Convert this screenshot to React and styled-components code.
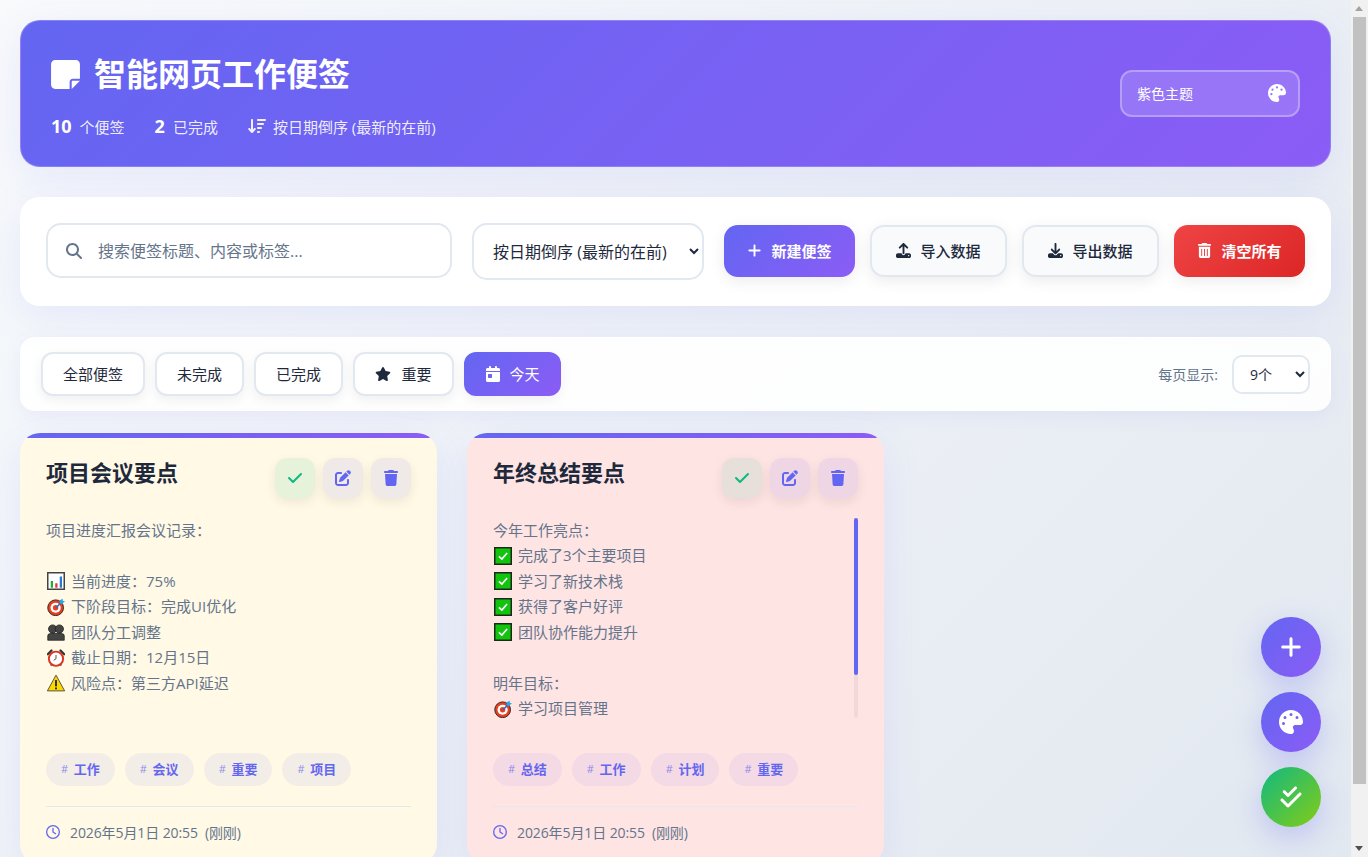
import React from "react";
import styled, { createGlobalStyle } from "styled-components";
import {
  FaNoteSticky, FaArrowDownWideShort, FaPalette, FaMagnifyingGlass, FaPlus, FaUpload, FaDownload,
  FaTrashCan, FaTrash, FaStar, FaCalendarDay, FaCheck, FaPenToSquare, FaRegClock, FaCheckDouble,
} from "react-icons/fa6";

const FONT = `"Open Sans", "Noto Sans CJK SC", sans-serif`;
const BRAND = "linear-gradient(135deg, #6366f1, #8b5cf6)";

const Global = createGlobalStyle`
  body {
    margin: 0;
    font-family: ${FONT};
    color: #1e293b;
    background: linear-gradient(135deg, #f8fafc 0%, #e2e8f0 100%);
    background-attachment: fixed;
    min-height: 100vh;
  }
  * { box-sizing: border-box; }
`;

const Page = styled.div`
  padding: 20px 37px 52px 20px;
  display: flex;
  flex-direction: column;
`;

const ScrollRail = styled.div`
  position: fixed;
  top: 0;
  right: 0;
  bottom: 0;
  width: 17px;
  background: #f1f1f1;
  &::before, &::after {
    content: "";
    position: absolute;
    left: 4px;
    border-left: 4.5px solid transparent;
    border-right: 4.5px solid transparent;
  }
  &::before { top: 6px; border-bottom: 5px solid #a3a3a3; }
  &::after { bottom: 6px; border-top: 5px solid #505050; }
`;

const ScrollThumb = styled.div`
  position: absolute;
  top: 17px;
  left: 2px;
  width: 13px;
  height: 767px;
  background: #c1c1c1;
`;

const Header = styled.header`
  height: 147px;
  padding: 30px;
  border: 1px solid rgba(255, 255, 255, 0.2);
  border-radius: 20px;
  background: ${BRAND};
  color: #fff;
  box-shadow: 0 10px 40px rgba(99, 102, 241, 0.1);
  display: flex;
  align-items: center;
  justify-content: space-between;
  margin-bottom: 30px;
`;

const Brand = styled.div`
  display: flex;
  flex-direction: column;
  gap: 18px;
  padding-top: 3px;
`;

const Title = styled.h1`
  margin: 0;
  display: flex;
  align-items: center;
  gap: 12px;
  font-size: 32px;
  line-height: 44px;
  font-weight: 700;
  svg { font-size: 33px; margin-left: -2px; }
`;

const Stats = styled.div`
  display: flex;
  align-items: center;
  gap: 30px;
  height: 24px;
`;

const Stat = styled.div`
  display: flex;
  align-items: center;
  gap: 8px;
  font-size: 15px;
  color: rgba(255, 255, 255, 0.9);
  b { font-size: 18px; font-weight: 700; color: #fff; }
  svg { font-size: 18px; margin-right: -1px; }
`;

const ThemeBox = styled.div`
  width: 180px;
  height: 47px;
  padding: 0 12px 0 15px;
  border: 2px solid rgba(255, 255, 255, 0.3);
  border-radius: 12px;
  background: rgba(255, 255, 255, 0.15);
  display: flex;
  align-items: center;
  justify-content: space-between;
  font-size: 14px;
  svg { font-size: 18px; margin-bottom: 1px; }
`;

const ThemeLabel = styled.span`
  padding-bottom: 2px;
`;

const Toolbar = styled.section`
  padding: 26px;
  border-radius: 20px;
  background: #fff;
  box-shadow: 0 10px 40px rgba(99, 102, 241, 0.1);
  display: flex;
  align-items: flex-start;
  gap: 20px;
  margin-bottom: 31px;
`;

const Search = styled.label`
  width: 406px;
  height: 55px;
  padding: 0 18px;
  border: 2px solid #e2e8f0;
  border-radius: 15px;
  background: #fff;
  display: flex;
  align-items: center;
  gap: 14px;
  color: #64748b;
  svg { font-size: 16px; flex: none; }
`;

const SearchInput = styled.input`
  flex: 1;
  min-width: 0;
  border: 0;
  outline: 0;
  background: none;
  font: 16px ${FONT};
  color: #1e293b;
  &::placeholder { color: #64748b; opacity: 1; }
`;

const SortSelect = styled.select`
  width: 232px;
  height: 57px;
  padding: 0 6px 0 15px;
  border: 2px solid #e2e8f0;
  border-radius: 15px;
  background: #fff;
  font: 16px ${FONT};
  color: #1e293b;
`;

const Actions = styled.div`
  display: flex;
  gap: 15px;
  margin-top: 2px;
`;

const variants = {
  primary: `background: ${BRAND}; color: #fff; font-weight: 700; border: 0;`,
  danger: `background: linear-gradient(135deg, #ef4444, #dc2626); color: #fff; font-weight: 700; border: 0;`,
  plain: `background: #f8fafc; color: #1e293b; font-weight: 500; border: 2px solid #e2e8f0;`,
};

const ActionButton = styled.button`
  height: 52px;
  width: ${(p) => p.$w}px;
  padding: 0 0 2px;
  border-radius: 14px;
  font-family: ${FONT};
  font-size: 15px;
  display: flex;
  align-items: center;
  justify-content: center;
  gap: 9px;
  box-shadow: 0 4px 15px rgba(0, 0, 0, 0.08);
  ${(p) => variants[p.$variant]}
  svg { font-size: 15px; }
`;

const FilterBar = styled.section`
  height: 74px;
  padding: 0 20px;
  border: 1px solid rgba(255, 255, 255, 0.6);
  border-radius: 15px;
  background: rgba(255, 255, 255, 0.9);
  box-shadow: 0 5px 20px rgba(99, 102, 241, 0.08);
  display: flex;
  align-items: center;
  justify-content: space-between;
  margin-bottom: 22px;
`;

const FilterGroup = styled.div`
  display: flex;
  gap: 10px;
`;

const FilterButton = styled.button`
  height: 44px;
  width: ${(p) => p.$w}px;
  padding: 0 0 1px;
  border: ${(p) => (p.$active ? "0" : "2px solid #e2e8f0")};
  border-radius: 12px;
  background: ${(p) => (p.$active ? BRAND : "#fff")};
  color: ${(p) => (p.$active ? "#fff" : "#1e293b")};
  box-shadow: 0 4px 12px rgba(0, 0, 0, 0.06);
  font: 15px ${FONT};
  display: flex;
  align-items: center;
  justify-content: center;
  gap: ${(p) => (p.$active ? "8px" : "10px")};
  svg { font-size: 16px; }
`;

const PageSize = styled.div`
  display: flex;
  align-items: center;
  gap: 14px;
  font-size: 14px;
  color: #64748b;
`;

const SizeSelect = styled.select`
  width: 78px;
  height: 39px;
  padding: 0 0 0 12px;
  border: 2px solid #e2e8f0;
  border-radius: 10px;
  background: #fff;
  font: 14px ${FONT};
  color: #1e293b;
`;

const Grid = styled.main`
  display: grid;
  grid-template-columns: repeat(3, 1fr);
  gap: 30px;
`;

const Card = styled.article`
  position: relative;
  overflow: hidden;
  padding: 25px 26px 25px;
  border-radius: 20px;
  background: ${(p) => p.$bg};
  box-shadow: 0 10px 40px rgba(99, 102, 241, 0.1);
  &::before {
    content: "";
    position: absolute;
    inset: 0 0 auto 0;
    height: 5px;
    background: ${BRAND};
  }
`;

const CardHead = styled.div`
  display: flex;
  justify-content: space-between;
  align-items: flex-start;
  margin-bottom: 19.8px;
`;

const CardTitle = styled.h2`
  margin: 0;
  font-size: 22px;
  line-height: 28px;
  font-weight: 700;
  color: #1e293b;
`;

const CardTools = styled.div`
  display: flex;
  gap: 8px;
`;

const ToolButton = styled.button`
  width: 40px;
  height: 40px;
  padding: 0;
  border: 0;
  border-radius: 12px;
  background: ${(p) => (p.$ok ? "rgba(16, 185, 129, 0.1)" : "rgba(99, 102, 241, 0.1)")};
  color: ${(p) => (p.$ok ? "#10b981" : "#6366f1")};
  box-shadow: 0 4px 12px rgba(0, 0, 0, 0.08);
  display: flex;
  align-items: center;
  justify-content: center;
  font-size: 16px;
`;

const Content = styled.div`
  position: relative;
  height: 200px;
  overflow: hidden;
  font-size: 15px;
  line-height: 25.5px;
  color: #64748b;
  margin-bottom: 35.2px;
`;

const ContentRail = styled.div`
  position: absolute;
  top: 0;
  right: 0;
  bottom: 0;
  width: 4px;
  border-radius: 2px;
  background: rgba(0, 0, 0, 0.05);
`;

const ContentThumb = styled.div`
  height: 157px;
  border-radius: 2px;
  background: #6366f1;
`;

const Line = styled.div`
  min-height: 25.5px;
  white-space: nowrap;
`;

const Emoji = styled.svg`
  display: inline-block;
  width: 18px;
  height: 18px;
  margin: 0 6px 0 1px;
  vertical-align: -3.5px;
`;

const Tags = styled.div`
  display: flex;
  gap: 10px;
  padding-bottom: 20px;
  border-bottom: 1px solid #e2e8f0;
  margin-bottom: 18px;
`;

const Tag = styled.span`
  height: 33px;
  padding: 0 15px 2px;
  border-radius: 17px;
  background: rgba(99, 102, 241, 0.08);
  color: #6366f1;
  font-size: 13px;
  font-weight: 700;
  display: flex;
  align-items: center;
  gap: 5.7px;
  i { font-style: normal; font-weight: 400; font-size: 11px; opacity: 0.7; }
`;

const Meta = styled.div`
  display: flex;
  align-items: center;
  height: 14px;
  font-size: 14px;
  letter-spacing: -0.1px;
  color: #64748b;
  gap: 10px;
  svg { color: #6366f1; font-size: 14px; }
  span + span { margin-left: -3px; }
`;

const FabStack = styled.div`
  position: fixed;
  right: 47px;
  bottom: 30px;
  display: flex;
  flex-direction: column;
  gap: 15px;
`;

const Fab = styled.button`
  width: 60px;
  height: 60px;
  padding: 0;
  border: 0;
  border-radius: 50%;
  background: ${(p) => p.$bg || BRAND};
  color: #fff;
  box-shadow: 0 10px 30px rgba(99, 102, 241, 0.3);
  display: flex;
  align-items: center;
  justify-content: center;
  font-size: 24px;
`;

const drawings = {
  chart: (<><rect x="1" y="1" width="22" height="22" fill="#fff" stroke="#444" strokeWidth="2" /><rect x="5" y="12" width="3" height="9" fill="#1cae3a" /><rect x="11" y="15" width="3" height="6" fill="#e33" /><rect x="17" y="6" width="3" height="15" fill="#2a78d8" /></>),
  target: (<><circle cx="11.5" cy="13" r="10.5" fill="#e8401f" stroke="#222" strokeWidth="1.2" /><circle cx="11.5" cy="13" r="6.8" fill="#fff" /><circle cx="11.5" cy="13" r="3.6" fill="#e8401f" /><path d="M12 13 L21 4" stroke="#1f6fd0" strokeWidth="2.2" /><path d="M17 3 L21 1 L21 4 L24 4 L20 8 L17 7 Z" fill="#25a9ec" /></>),
  people: (<><circle cx="7.5" cy="8" r="5.5" fill="#444" stroke="#222" /><circle cx="16.5" cy="8" r="5.5" fill="#444" stroke="#222" /><path d="M1 23 V17 Q1 14 5 14 H19 Q23 14 23 17 V23 Z" fill="#444" stroke="#222" /></>),
  clock: (<><path d="M1 7 L6 2 M23 7 L18 2" stroke="#333" strokeWidth="3" strokeLinecap="round" /><path d="M5 22 L7 19 M19 22 L17 19" stroke="#333" strokeWidth="2" /><circle cx="12" cy="13" r="9.5" fill="#fff" stroke="#d8361f" strokeWidth="2.6" /><path d="M12 8 V13 L9 15" stroke="#444" strokeWidth="1.2" fill="none" /></>),
  warn: (<><path d="M12 1.5 L23.5 22.5 H0.5 Z" fill="#fbd800" stroke="#4a4a3a" strokeWidth="1.2" /><rect x="10.8" y="8" width="2.4" height="8.5" fill="#222" /><rect x="10.8" y="18" width="2.4" height="2.4" fill="#222" /></>),
  check: (<><rect x="1" y="1" width="22" height="22" fill="#13c40f" stroke="#1a2a1a" strokeWidth="2" /><path d="M6.5 12.5 L10.5 16 L17.5 8" stroke="#fff" strokeWidth="2.2" fill="none" /></>),
};

const Icon = ({ name }) => <Emoji viewBox="0 0 24 24" aria-hidden="true">{drawings[name]}</Emoji>;

const notes = [
  {
    title: "项目会议要点",
    bg: "#fff9e6",
    lines: [
      [null, "项目进度汇报会议记录："],
      [null, ""],
      ["chart", "当前进度：75%"],
      ["target", "下阶段目标：完成UI优化"],
      ["people", "团队分工调整"],
      ["clock", "截止日期：12月15日"],
      ["warn", "风险点：第三方API延迟"],
    ],
    tags: ["工作", "会议", "重要", "项目"],
  },
  {
    title: "年终总结要点",
    bg: "#ffe4e4",
    scroll: true,
    lines: [
      [null, "今年工作亮点："],
      ["check", "完成了3个主要项目"],
      ["check", "学习了新技术栈"],
      ["check", "获得了客户好评"],
      ["check", "团队协作能力提升"],
      [null, ""],
      [null, "明年目标："],
      ["target", "学习项目管理"],
    ],
    tags: ["总结", "工作", "计划", "重要"],
  },
];

export default function App() {
  return (
    <Page>
      <Global />
      <Header>
        <Brand>
          <Title><FaNoteSticky />智能网页工作便签</Title>
          <Stats>
            <Stat><b>10</b>个便签</Stat>
            <Stat><b>2</b>已完成</Stat>
            <Stat><FaArrowDownWideShort />按日期倒序 (最新的在前)</Stat>
          </Stats>
        </Brand>
        <ThemeBox><ThemeLabel>紫色主题</ThemeLabel><FaPalette /></ThemeBox>
      </Header>

      <Toolbar>
        <Search>
          <FaMagnifyingGlass />
          <SearchInput placeholder="搜索便签标题、内容或标签..." />
        </Search>
        <SortSelect defaultValue="desc">
          <option value="desc">按日期倒序 (最新的在前)</option>
          <option value="asc">按日期正序 (最早的在前)</option>
        </SortSelect>
        <Actions>
          <ActionButton $variant="primary" $w={131}><FaPlus />新建便签</ActionButton>
          <ActionButton $variant="plain" $w={137}><FaUpload />导入数据</ActionButton>
          <ActionButton $variant="plain" $w={137}><FaDownload />导出数据</ActionButton>
          <ActionButton $variant="danger" $w={131}><FaTrashCan />清空所有</ActionButton>
        </Actions>
      </Toolbar>

      <FilterBar>
        <FilterGroup>
          <FilterButton $w={104}>全部便签</FilterButton>
          <FilterButton $w={89}>未完成</FilterButton>
          <FilterButton $w={89}>已完成</FilterButton>
          <FilterButton $w={101}><FaStar />重要</FilterButton>
          <FilterButton $w={97} $active><FaCalendarDay />今天</FilterButton>
        </FilterGroup>
        <PageSize>
          每页显示:
          <SizeSelect defaultValue="9">
            <option value="9">9个</option>
            <option value="18">18个</option>
          </SizeSelect>
        </PageSize>
      </FilterBar>

      <Grid>
        {notes.map((note) => (
          <Card key={note.title} $bg={note.bg}>
            <CardHead>
              <CardTitle>{note.title}</CardTitle>
              <CardTools>
                <ToolButton $ok><FaCheck /></ToolButton>
                <ToolButton><FaPenToSquare /></ToolButton>
                <ToolButton><FaTrash /></ToolButton>
              </CardTools>
            </CardHead>
            <Content>
              {note.lines.map(([icon, text], i) => (
                <Line key={i}>{icon && <Icon name={icon} />}{text}</Line>
              ))}
              {note.scroll && <ContentRail><ContentThumb /></ContentRail>}
            </Content>
            <Tags>
              {note.tags.map((t) => <Tag key={t}><i>#</i>{t}</Tag>)}
            </Tags>
            <Meta>
              <FaRegClock />
              <span>2026年5月1日 20:55</span>
              <span>(刚刚)</span>
            </Meta>
          </Card>
        ))}
      </Grid>

      <FabStack>
        <Fab><FaPlus /></Fab>
        <Fab><FaPalette /></Fab>
        <Fab $bg="linear-gradient(135deg, #10b981, #84cc16)"><FaCheckDouble /></Fab>
      </FabStack>
      <ScrollRail><ScrollThumb /></ScrollRail>
    </Page>
  );
}
